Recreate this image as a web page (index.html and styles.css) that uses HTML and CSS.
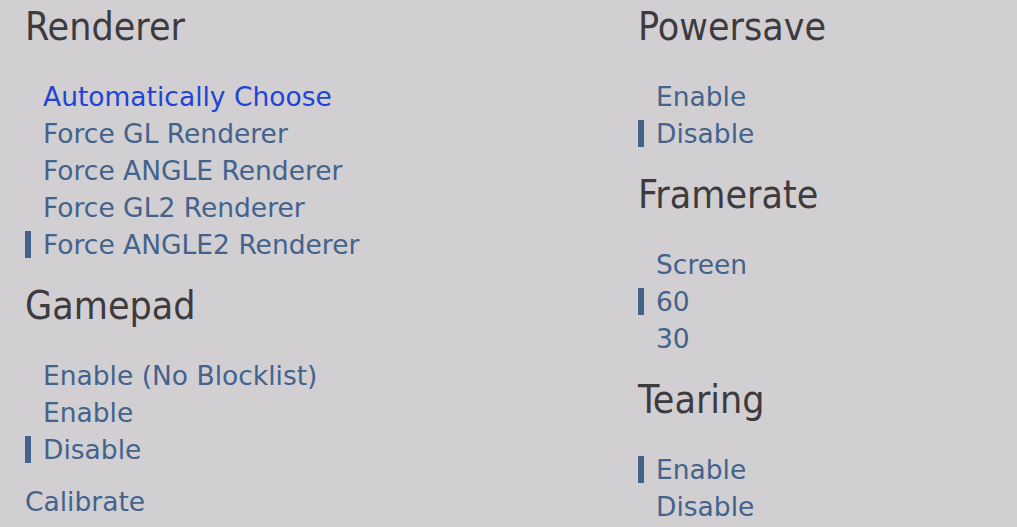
FILE: index.html
```html
<!DOCTYPE html>
<html lang="en">
<head>
    <meta charset="UTF-8">
    <title>Preferences</title>
    <link rel="stylesheet" href="styles.css">
</head>
<body>
    <div class="prefs">
        <div class="column">
            <section class="group">
                <h2>Renderer</h2>
                <ul class="choices">
                    <li class="hover">Automatically Choose</li>
                    <li>Force GL Renderer</li>
                    <li>Force ANGLE Renderer</li>
                    <li>Force GL2 Renderer</li>
                    <li class="selected">Force ANGLE2 Renderer</li>
                </ul>
            </section>
            <section class="group">
                <h2>Gamepad</h2>
                <ul class="choices">
                    <li>Enable (No Blocklist)</li>
                    <li>Enable</li>
                    <li class="selected">Disable</li>
                </ul>
                <div class="action">Calibrate</div>
            </section>
        </div>

        <div class="column">
            <section class="group">
                <h2>Powersave</h2>
                <ul class="choices">
                    <li>Enable</li>
                    <li class="selected">Disable</li>
                </ul>
            </section>
            <section class="group">
                <h2>Framerate</h2>
                <ul class="choices">
                    <li>Screen</li>
                    <li class="selected">60</li>
                    <li>30</li>
                </ul>
            </section>
            <section class="group">
                <h2>Tearing</h2>
                <ul class="choices">
                    <li class="selected">Enable</li>
                    <li>Disable</li>
                </ul>
            </section>
        </div>
    </div>
</body>
</html>
```

FILE: styles.css
```css
body {
    margin: 0;
    background-color: #d1cfd2;
    font-family: 'DejaVu Sans', sans-serif;
    overflow: hidden;
}

.prefs {
    display: grid;
    grid-template-columns: 613px 1fr;
    padding: 4px 0 0 25px;
}

.column {
    display: flex;
    flex-direction: column;
    gap: 20.5px;
}

.group h2 {
    margin: 0 0 27.5px 0;
    font-family: 'DejaVu Sans Condensed', 'DejaVu Sans', sans-serif;
    font-stretch: condensed;
    font-weight: normal;
    font-size: 39px;
    line-height: 46px;
    color: #3d3b3e;
}

.choices {
    list-style: none;
    margin: 0;
    padding: 0;
}

.choices li {
    display: flex;
    align-items: center;
    height: 37px;
    font-size: 26.5px;
    line-height: 37px;
    color: #43638c;
    white-space: nowrap;
}

.choices li::before {
    content: "";
    width: 6px;
    height: 27px;
    margin-right: 12px;
    flex-shrink: 0;
}

.choices li.selected::before {
    background-color: #43638c;
}

.choices li.hover {
    color: #2144d6;
}

.action {
    margin-top: 15px;
    font-size: 26.5px;
    line-height: 37px;
    color: #43638c;
}
```
